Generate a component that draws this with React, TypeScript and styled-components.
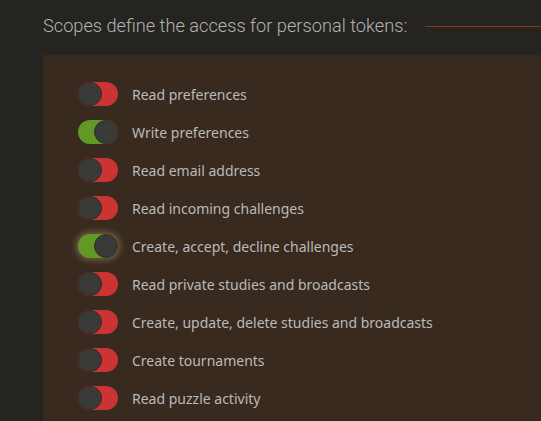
import React from 'react';
import styled, { createGlobalStyle } from 'styled-components';

const GlobalStyle = createGlobalStyle`
  html, body {
    margin: 0;
    padding: 0;
    background: #262421;
    overflow: hidden;
  }
`

const Page = styled.div`
  display: flex;
  flex-direction: column;
  width: 541px;
  height: 421px;
  padding: 13px 0 0 43px;
  box-sizing: border-box;
  overflow: hidden;
  background: #262421;
  font-family: "Noto Sans", "Liberation Sans", sans-serif;
`

const Heading = styled.div`
  display: flex;
  align-items: center;
  gap: 18px;
  height: 24px;
  margin-bottom: 18px;
`

const HeadingText = styled.h2`
  margin: 0;
  font-family: Roboto, "Liberation Sans", sans-serif;
  font-weight: 300;
  font-size: 18.2px;
  color: #b3b3b3;
  white-space: nowrap;
`

const HeadingRule = styled.div`
  flex: 1;
  height: 1px;
  margin-top: 3px;
  background: #8b3a14;
`

const Panel = styled.div`
  flex: 1;
  display: flex;
  flex-direction: column;
  gap: 14px;
  padding: 27px 0 0 35px;
  background: #382a1f;
`

const Row = styled.label`
  display: flex;
  align-items: center;
  gap: 14px;
  height: 24px;
`

const Track = styled.span<{ $on: boolean; $focus?: boolean }>`
  position: relative;
  width: 40px;
  height: 24px;
  border-radius: 12px;
  background: ${p => (p.$on ? '#629924' : '#cc3333')};
  box-shadow: ${p => (p.$focus ? '0 0 6px 2px rgba(190, 170, 120, 0.45)' : 'none')};
  flex-shrink: 0;
`

const Knob = styled.span<{ $on: boolean }>`
  position: absolute;
  top: 0;
  left: ${p => (p.$on ? '16px' : '0')};
  width: 24px;
  height: 24px;
  border-radius: 50%;
  box-sizing: border-box;
  background: #3a3a38;
  border: 1px solid #2f2b27;
`

const Label = styled.span`
  font-size: 14px;
  color: #bababa;
  white-space: nowrap;
`

const scopes = [
  { label: 'Read preferences', on: false },
  { label: 'Write preferences', on: true },
  { label: 'Read email address', on: false },
  { label: 'Read incoming challenges', on: false },
  { label: 'Create, accept, decline challenges', on: true, focus: true },
  { label: 'Read private studies and broadcasts', on: false },
  { label: 'Create, update, delete studies and broadcasts', on: false },
  { label: 'Create tournaments', on: false },
  { label: 'Read puzzle activity', on: false },
];

const App: React.FC = () => {
  return (
    <>
      <GlobalStyle />
      <Page>
        <Heading>
          <HeadingText>Scopes define the access for personal tokens:</HeadingText>
          <HeadingRule />
        </Heading>
        <Panel>
          {scopes.map(s => (
            <Row key={s.label}>
              <Track $on={s.on} $focus={s.focus}>
                <Knob $on={s.on} />
              </Track>
              <Label>{s.label}</Label>
            </Row>
          ))}
        </Panel>
      </Page>
    </>
  )
}

export default App;
